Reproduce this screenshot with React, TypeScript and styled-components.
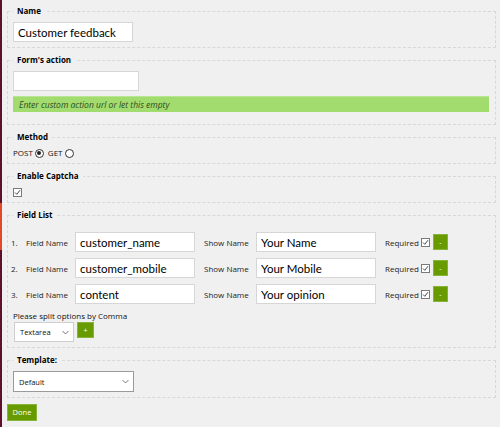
import React from "react";
import styled, { createGlobalStyle } from "styled-components";

const GlobalStyle = createGlobalStyle`
  html, body { margin: 0; padding: 0; background: #f0f0f0; }
  body { font-family: "Open Sans", "Liberation Sans", sans-serif; color: #1a1a1a; }
  * { box-sizing: border-box; }
`;

const Page = styled.div`
  display: flex;
  width: 500px;
  min-height: 427px;
  background: #f0f0f0;
`;

const EdgeStrip = styled.div`
  width: 2px;
  flex: none;
  background: linear-gradient(
    to bottom,
    #5e0f2c 0px,
    #5e0f2c 203px,
    #e2482a 203px,
    #e2482a 250px,
    #5e0f2c 250px
  );
`;

const Content = styled.div`
  flex: 1;
  padding-top: 5px;
`;

const Fieldset = styled.fieldset`
  margin: 0 4px 6px 5px;
  padding: 5px 6px 5px 5px;
  border: 1px dashed #d8d8d8;
  min-width: 0;
`;

const Legend = styled.legend`
  padding: 0 4px;
  font-size: 8px;
  line-height: 12px;
  height: 12px;
  font-weight: 700;
  color: #000;
`;

const TextInput = styled.input<{ $w?: number }>`
  display: block;
  width: ${(p) => p.$w ?? 120}px;
  height: 20px;
  padding: 0 4px;
  border: 1px solid #d6d6d6;
  background: #fff;
  font-family: Lato, "Open Sans", sans-serif;
  font-size: 11.5px;
  color: #000;
  outline: none;
`;

const Hint = styled.div`
  margin: 5px 0 7px;
  height: 16px;
  line-height: 16px;
  padding-left: 6px;
  background: #a2dc6e;
  border-top: 1px solid #b8e692;
  color: #2f4a1c;
  font-size: 8.5px;
  font-style: italic;
`;

const InlineRow = styled.div`
  display: flex;
  align-items: center;
  gap: 2px;
  height: 10px;
  line-height: 10px;
  font-size: 8px;
  color: #111;
`;

const Radio = styled.span<{ $checked?: boolean }>`
  display: inline-block;
  width: 9px;
  height: 9px;
  border-radius: 50%;
  border: 1px solid #333;
  background: #fff;
  position: relative;
  margin-right: 2px;
  &::after {
    content: "";
    display: ${(p) => (p.$checked ? "block" : "none")};
    position: absolute;
    left: 1.5px;
    top: 1.5px;
    width: 4px;
    height: 4px;
    border-radius: 50%;
    background: #222;
  }
`;

const CheckBoxBox = styled.span`
  display: inline-flex;
  align-items: center;
  justify-content: center;
  width: 9px;
  height: 9px;
  border: 1px solid #7a7a7a;
  background: #fff;
  flex: none;
`;

const Check = () => (
  <CheckBoxBox>
    <svg width="7" height="7" viewBox="0 0 7 7">
      <path d="M1 3.5 L2.8 5.3 L6 1.2" stroke="#333" strokeWidth="0.9" fill="none" />
    </svg>
  </CheckBoxBox>
);

const FieldRows = styled.div`
  display: flex;
  flex-direction: column;
  gap: 6px;
  margin: 6px 0 0 -2px;
`;

const FieldRow = styled.div`
  display: flex;
  align-items: center;
  height: 20px;
  font-size: 8px;
  color: #222;
`;

const Num = styled.span`
  width: 15px;
`;

const Label = styled.span<{ $w: number; $pad?: number }>`
  width: ${(p) => p.$w}px;
  padding-left: ${(p) => p.$pad ?? 0}px;
  flex: none;
`;

const RequiredLabel = styled.span`
  margin-left: 9px;
  margin-right: 2px;
`;

const GreenButton = styled.button<{ $w: number; $h: number }>`
  display: block;
  width: ${(p) => p.$w}px;
  height: ${(p) => p.$h}px;
  padding: 0;
  border: 1px solid #86b43a;
  background: #679b00;
  color: #fff;
  font-family: "Open Sans", sans-serif;
  font-size: 7px;
  line-height: 1;
  cursor: pointer;
  flex: none;
`;

const MinusButton = styled(GreenButton)`
  margin-left: 3px;
`;

const SplitNote = styled.div`
  margin-top: 6px;
  font-size: 8px;
  line-height: 12px;
  color: #111;
`;

const AddRow = styled.div`
  display: flex;
  align-items: flex-start;
  gap: 3px;
  margin-left: 1px;
`;

const SelectBox = styled.div<{ $w: number; $h: number; $dark?: boolean }>`
  width: ${(p) => p.$w}px;
  height: ${(p) => p.$h}px;
  display: flex;
  align-items: center;
  justify-content: space-between;
  padding: 0 4px 0 5px;
  background: #fff;
  border: 1px solid ${(p) => (p.$dark ? "#9a9a9a" : "#cfcfcf")};
  font-size: 7.5px;
  color: #111;
`;

const Chevron = () => (
  <svg width="7" height="5" viewBox="0 0 7 5">
    <path d="M0.5 1 L3.5 4 L6.5 1" stroke="#555" strokeWidth="0.8" fill="none" />
  </svg>
);

const DoneButton = styled(GreenButton)`
  margin-left: 5px;
  font-size: 7.5px;
`;

const fields = [
  { name: "customer_name", show: "Your Name" },
  { name: "customer_mobile", show: "Your Mobile" },
  { name: "content", show: "Your opinion" },
];

export default function App() {
  return (
    <Page>
      <GlobalStyle />
      <EdgeStrip />
      <Content>
        <Fieldset>
          <Legend>Name</Legend>
          <TextInput defaultValue="Customer feedback" />
        </Fieldset>
        <Fieldset>
          <Legend>Form's action</Legend>
          <TextInput $w={126} defaultValue="" />
          <Hint>Enter custom action url or let this empty</Hint>
        </Fieldset>
        <Fieldset>
          <Legend>Method</Legend>
          <InlineRow>
            POST <Radio $checked /> GET <Radio />
          </InlineRow>
        </Fieldset>
        <Fieldset>
          <Legend>Enable Captcha</Legend>
          <InlineRow>
            <Check />
          </InlineRow>
        </Fieldset>
        <Fieldset>
          <Legend>Field List</Legend>
          <FieldRows>
            {fields.map((f, i) => (
              <FieldRow key={f.name}>
                <Num>{i + 1}.</Num>
                <Label $w={49}>Field Name</Label>
                <TextInput defaultValue={f.name} />
                <Label $w={61} $pad={9}>Show Name</Label>
                <TextInput defaultValue={f.show} />
                <RequiredLabel>Required</RequiredLabel>
                <Check />
                <MinusButton $w={15} $h={16}>-</MinusButton>
              </FieldRow>
            ))}
          </FieldRows>
          <SplitNote>Please split options by Comma</SplitNote>
          <AddRow>
            <SelectBox $w={60} $h={20}>
              Textarea
              <Chevron />
            </SelectBox>
            <GreenButton $w={17} $h={16}>+</GreenButton>
          </AddRow>
        </Fieldset>
        <Fieldset>
          <Legend>Template:</Legend>
          <SelectBox $w={121} $h={21} $dark>
            Default
            <Chevron />
          </SelectBox>
        </Fieldset>
        <DoneButton $w={30} $h={17}>Done</DoneButton>
      </Content>
    </Page>
  );
}
